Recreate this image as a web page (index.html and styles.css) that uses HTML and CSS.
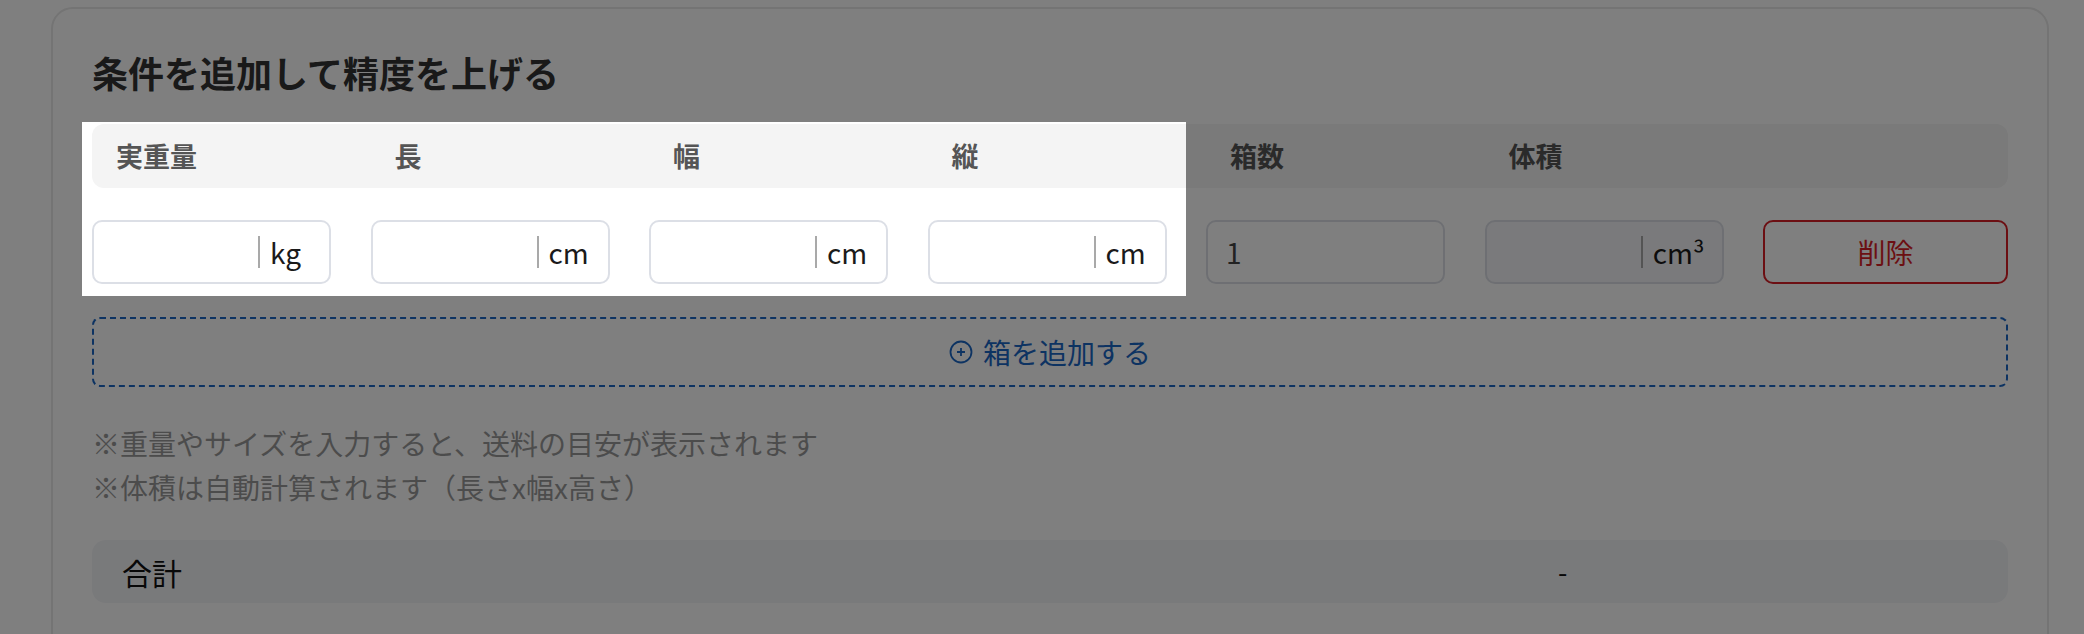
FILE: index.html
```html
<!DOCTYPE html>
<html lang="ja">
<head>
<meta charset="utf-8">
<title>条件を追加して精度を上げる</title>
<link rel="stylesheet" href="styles.css">
</head>
<body>
<section class="card">
  <h2 class="title">条件を追加して精度を上げる</h2>
  <div class="grid head">
    <div class="th">実重量</div>
    <div class="th">長</div>
    <div class="th">幅</div>
    <div class="th">縦</div>
    <div class="th">箱数</div>
    <div class="th">体積</div>
    <div class="th"></div>
  </div>
  <div class="grid row">
    <div class="field"><span class="val"></span><span class="sep"></span><span class="unit">kg</span></div>
    <div class="field"><span class="val"></span><span class="sep"></span><span class="unit">cm</span></div>
    <div class="field"><span class="val"></span><span class="sep"></span><span class="unit">cm</span></div>
    <div class="field"><span class="val"></span><span class="sep"></span><span class="unit">cm</span></div>
    <div class="field"><span class="val num">1</span></div>
    <div class="field disabled"><span class="val"></span><span class="sep"></span><span class="unit">cm³</span></div>
    <button class="delete" type="button">削除</button>
  </div>
  <button class="add" type="button">
    <svg class="add-icon" viewBox="0 0 24 24" width="24" height="24" aria-hidden="true">
      <circle cx="12" cy="12" r="10.5" fill="none" stroke="currentColor" stroke-width="1.8"/>
      <path d="M12 8v8M8 12h8" stroke="currentColor" stroke-width="1.8" fill="none"/>
    </svg>
    <span>箱を追加する</span>
  </button>
  <div class="notes">
    <p>※重量やサイズを入力すると、送料の目安が表示されます</p>
    <p>※体積は自動計算されます（長さx幅x高さ）</p>
  </div>
  <div class="total">
    <span class="total-label">合計</span>
    <span class="total-value">-</span>
  </div>
</section>
<div class="spotlight"></div>
</body>
</html>
```

FILE: styles.css
```css
html, body {
  margin: 0;
  padding: 0;
  background: #ffffff;
  overflow: hidden;
  height: 634px;
}
body {
  font-family: "Noto Sans CJK JP", "Noto Sans", sans-serif;
  color: #333;
  position: relative;
}
.card {
  box-sizing: border-box;
  width: 1998px;
  margin: 7px 0 0 51px;
  border: 2px solid #e8e8e8;
  border-radius: 22px;
  background: #fff;
  padding: 36px 39px 120px;
}
.title {
  margin: 0 0 25px;
  font-size: 36px;
  line-height: 54px;
  font-weight: 700;
  color: #333;
}
.grid {
  display: grid;
  grid-template-columns: repeat(6, 239px) 1fr;
  column-gap: 39.5px;
}
.head {
  height: 64px;
  background: #f4f4f4;
  border-radius: 12px;
  align-items: center;
}
.th {
  padding-left: 24px;
  font-size: 27px;
  font-weight: 700;
  color: #555;
  line-height: 40px;
}
.row {
  margin-top: 32px;
  height: 64px;
}
.field {
  box-sizing: border-box;
  display: flex;
  align-items: center;
  height: 64px;
  border: 2px solid #dcdfe6;
  border-radius: 10px;
  background: #fff;
  padding: 0 17px 0 18px;
}
.field.disabled {
  background: #f5f5f8;
}
.val {
  flex: 1;
  font-size: 28px;
  color: #444;
}
.sep {
  width: 2px;
  height: 32px;
  background: #a9a9a9;
  margin-right: 10px;
}
.unit {
  min-width: 42px;
  font-size: 28px;
  color: #1a1a1a;
  line-height: 40px;
}
.delete {
  box-sizing: border-box;
  height: 64px;
  border: 2px solid #d81f27;
  border-radius: 10px;
  background: #fff;
  color: #d81f27;
  font-family: inherit;
  font-size: 28px;
  padding: 0;
}
.add {
  box-sizing: border-box;
  display: flex;
  align-items: center;
  justify-content: center;
  gap: 10px;
  width: 100%;
  height: 70px;
  margin-top: 33px;
  border: 2px dashed #1a66c4;
  border-radius: 8px;
  background: #fff;
  color: #1a66c4;
  font-family: inherit;
  font-size: 28px;
  padding: 0;
}
.add-icon {
  width: 24px;
  height: 24px;
}
.notes {
  margin-top: 34px;
  font-size: 28px;
  line-height: 44px;
  color: #999;
}
.notes p {
  margin: 0;
}
.total {
  display: flex;
  align-items: center;
  justify-content: space-between;
  height: 63px;
  margin-top: 31px;
  padding: 0 30px;
  background: #f3f4f7;
  border-radius: 14px;
}
.total-label {
  font-size: 30px;
  color: #111;
}
.total-value {
  width: 420px;
  font-size: 27px;
  color: #111;
}
.spotlight {
  position: absolute;
  left: 82px;
  top: 122px;
  width: 1104px;
  height: 174px;
  box-shadow: 0 0 0 3000px rgba(0, 0, 0, 0.5);
  pointer-events: none;
}
```
